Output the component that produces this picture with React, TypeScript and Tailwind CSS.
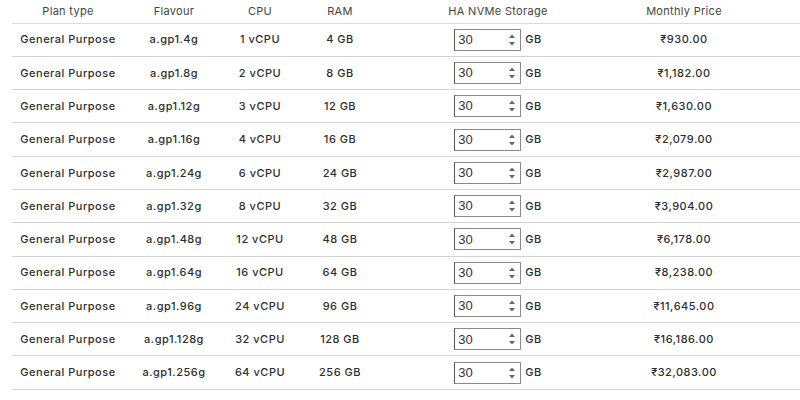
import React from "react";

const rows = [
  ["a.gp1.4g", "1 vCPU", "4 GB", "₹930.00"],
  ["a.gp1.8g", "2 vCPU", "8 GB", "₹1,182.00"],
  ["a.gp1.12g", "3 vCPU", "12 GB", "₹1,630.00"],
  ["a.gp1.16g", "4 vCPU", "16 GB", "₹2,079.00"],
  ["a.gp1.24g", "6 vCPU", "24 GB", "₹2,987.00"],
  ["a.gp1.32g", "8 vCPU", "32 GB", "₹3,904.00"],
  ["a.gp1.48g", "12 vCPU", "48 GB", "₹6,178.00"],
  ["a.gp1.64g", "16 vCPU", "64 GB", "₹8,238.00"],
  ["a.gp1.96g", "24 vCPU", "96 GB", "₹11,645.00"],
  ["a.gp1.128g", "32 vCPU", "128 GB", "₹16,186.00"],
  ["a.gp1.256g", "64 vCPU", "256 GB", "₹32,083.00"],
];

export default function App() {
  return (
    <div className="w-[800px] h-[400px] overflow-hidden bg-white pl-[12px]" style={{ fontFamily: "Inter, 'Noto Sans', sans-serif" }}>
      <table className="table-fixed border-collapse w-[788px] text-[11px] text-[#2e2e2e]">
        <colgroup>
          <col className="w-[112px]" />
          <col className="w-[100px]" />
          <col className="w-[72px]" />
          <col className="w-[88px]" />
          <col className="w-[228px]" />
          <col className="w-[144px]" />
          <col />
        </colgroup>
        <thead>
          <tr className="h-[23px] border-b border-[#dcdcdc] tracking-[0.3px]">
            <th className="font-normal text-center align-top pt-[3px] text-[#444]">Plan type</th>
            <th className="font-normal text-center align-top pt-[3px] text-[#444]">Flavour</th>
            <th className="font-normal text-center align-top pt-[3px] text-[#444]">CPU</th>
            <th className="font-normal text-center align-top pt-[3px] text-[#444]">RAM</th>
            <th className="font-normal text-center align-top pt-[3px] text-[#444]">HA NVMe Storage</th>
            <th className="font-normal text-center align-top pt-[3px] text-[#444]">Monthly Price</th>
            <th></th>
          </tr>
        </thead>
        <tbody>
          {rows.map((r, i) => (
            <tr key={i} className="h-[33.3px] border-b border-[#d4d4d4] tracking-[0.5px]">
              <td className="text-center font-medium">General Purpose</td>
              <td className="text-center font-medium">{r[0]}</td>
              <td className="text-center font-medium">{r[1]}</td>
              <td className="text-center font-medium">{r[2]}</td>
              <td className="text-center">
                <div className="flex items-center justify-center gap-[4px]">
                  <div className="flex items-center w-[67px] h-[22px] border border-[#8a8a8a] border-l-[#555] bg-white">
                    <span className="flex-1 pl-[3px] text-left text-[13px] text-[#333] font-normal tracking-normal" style={{ fontFamily: "'Liberation Sans', Arial, sans-serif" }}>30</span>
                    <svg width="8" height="14" viewBox="0 0 8 14" className="mr-[4px]">
                      <path d="M1 5 L4 1.5 L7 5 Z" fill="#666" />
                      <path d="M1 9 L4 12.5 L7 9 Z" fill="#666" />
                    </svg>
                  </div>
                  <span className="font-medium">GB</span>
                </div>
              </td>
              <td className="text-center font-medium">{r[3]}</td>
              <td></td>
            </tr>
          ))}
        </tbody>
      </table>
    </div>
  );
}
